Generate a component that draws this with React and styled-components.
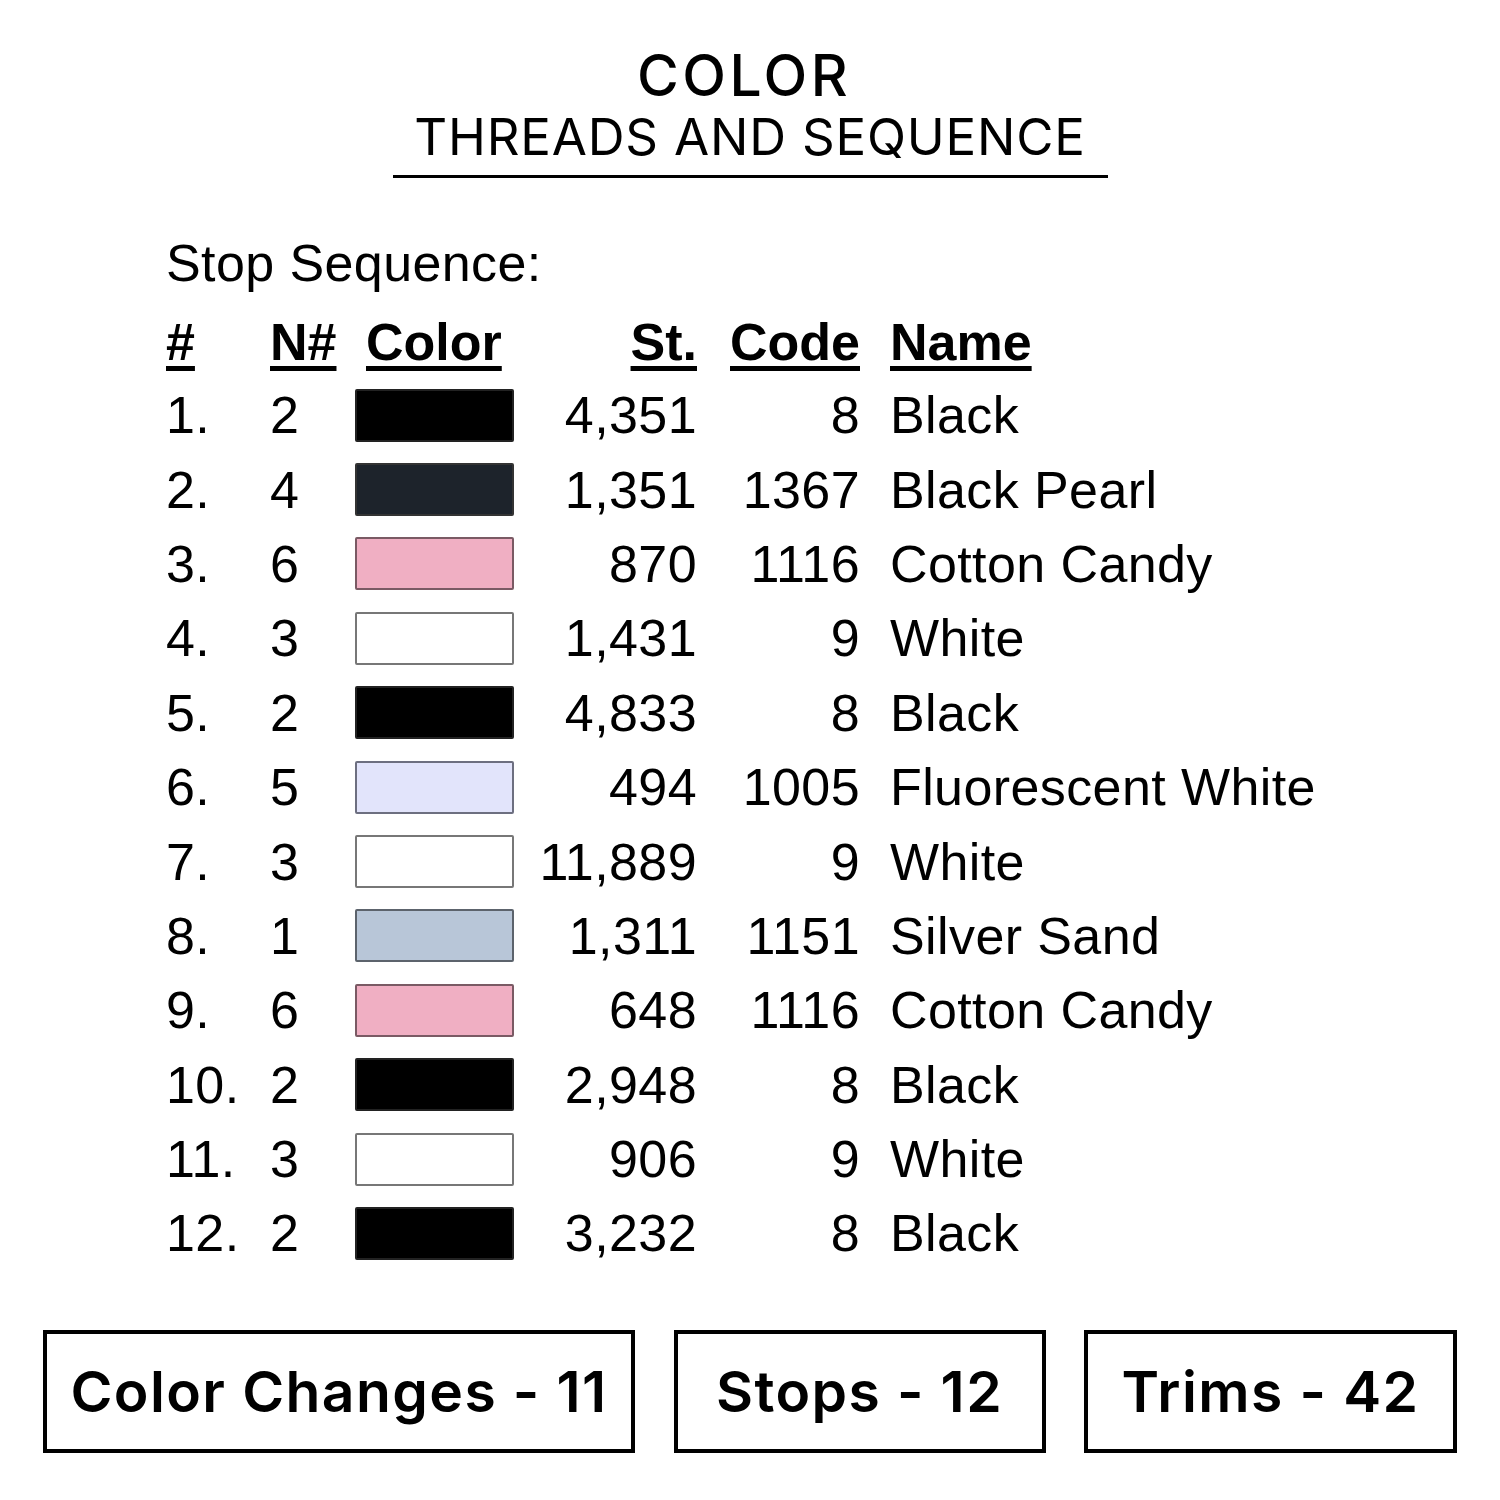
import React from 'react';
import styled, { createGlobalStyle } from 'styled-components';

const GlobalStyle = createGlobalStyle`
    html, body {
        margin: 0;
        padding: 0;
        background: #ffffff;
    }
`;

const Page = styled.div`
    width: 1500px;
    height: 1500px;
    background: #ffffff;
    color: #000000;
    display: flex;
    flex-direction: column;
    overflow: hidden;
`;

const Heading = styled.header`
    display: flex;
    flex-direction: column;
    align-items: center;
    padding-top: 44px;
    font-family: "Inter", "DejaVu Sans", sans-serif;
    h1 {
        margin: 0 12px 0 0;
        font-size: 57px;
        line-height: 64px;
        font-weight: 500;
        letter-spacing: 3.5px;
    }
    h2 {
        margin: 0;
        width: 715px;
        text-align: center;
        font-size: 51px;
        line-height: 58px;
        font-weight: 400;
        letter-spacing: 0.8px;
        padding-bottom: 9px;
        border-bottom: 3px solid #000;
    }
`;

const Sheet = styled.section`
    padding: 59px 0 0 166px;
    font-family: "Liberation Sans", Arial, sans-serif;
    font-size: 52px;
    letter-spacing: 0.4px;
    .caption {
        line-height: 52px;
        margin-bottom: 17px;
    }
`;

const Grid = styled.div`
    display: grid;
    grid-template-columns: 104px 85px 159px 183px 163px auto;
    grid-template-rows: 72px;
    grid-auto-rows: 74.4px;
    align-items: center;
`;

const Cell = styled.div`
    line-height: 52px;
    white-space: nowrap;
    text-align: ${p => (p.$right ? 'right' : 'left')};
    padding-left: ${p => p.$indent || 0}px;
`;

const HeadCell = styled(Cell)`
    font-weight: 700;
    letter-spacing: 0;
    text-decoration: underline;
    text-decoration-thickness: 5px;
    text-underline-offset: 6px;
`;

const Swatch = styled.div`
    height: 53px;
    background: ${p => p.$fill};
    border: 2px solid ${p => p.$edge};
    border-radius: 2px;
    box-sizing: border-box;
`;

const Totals = styled.footer`
    margin-top: auto;
    margin-bottom: 47px;
    padding: 0 43px;
    display: flex;
    justify-content: space-between;
`;

const TotalBox = styled.div`
    width: ${p => p.$w}px;
    height: 123px;
    box-sizing: border-box;
    border: 4px solid #000;
    display: flex;
    align-items: center;
    justify-content: center;
    font-family: "Inter", "DejaVu Sans", sans-serif;
    font-size: 57px;
    font-weight: 600;
    letter-spacing: 1.4px;
`;

const threads = [
    ['1.', '2', '#000000', '#222', '4,351', '8', 'Black'],
    ['2.', '4', '#1d232b', '#333', '1,351', '1367', 'Black Pearl'],
    ['3.', '6', '#f0afc3', '#7a5a64', '870', '1116', 'Cotton Candy'],
    ['4.', '3', '#ffffff', '#777', '1,431', '9', 'White'],
    ['5.', '2', '#000000', '#222', '4,833', '8', 'Black'],
    ['6.', '5', '#e2e4fb', '#6d6f80', '494', '1005', 'Fluorescent White'],
    ['7.', '3', '#ffffff', '#777', '11,889', '9', 'White'],
    ['8.', '1', '#b8c6d8', '#5c636c', '1,311', '1151', 'Silver Sand'],
    ['9.', '6', '#f0afc3', '#7a5a64', '648', '1116', 'Cotton Candy'],
    ['10.', '2', '#000000', '#222', '2,948', '8', 'Black'],
    ['11.', '3', '#ffffff', '#777', '906', '9', 'White'],
    ['12.', '2', '#000000', '#222', '3,232', '8', 'Black'],
];

const totals = [
    { label: 'Color Changes - 11', w: 592 },
    { label: 'Stops - 12', w: 372 },
    { label: 'Trims - 42', w: 373 },
];

export default function App() {
    return (
        <Page>
            <GlobalStyle />
            <Heading>
                <h1>COLOR</h1>
                <h2>THREADS AND SEQUENCE</h2>
            </Heading>
            <Sheet>
                <div className="caption">Stop Sequence:</div>
                <Grid>
                    <HeadCell>#</HeadCell>
                    <HeadCell>N#</HeadCell>
                    <HeadCell $indent={11}>Color</HeadCell>
                    <HeadCell $right>St.</HeadCell>
                    <HeadCell $right>Code</HeadCell>
                    <HeadCell $indent={30}>Name</HeadCell>
                    {threads.map(([n, needle, fill, edge, st, code, name]) => (
                        <React.Fragment key={n}>
                            <Cell>{n}</Cell>
                            <Cell>{needle}</Cell>
                            <Swatch $fill={fill} $edge={edge} />
                            <Cell $right>{st}</Cell>
                            <Cell $right>{code}</Cell>
                            <Cell $indent={30}>{name}</Cell>
                        </React.Fragment>
                    ))}
                </Grid>
            </Sheet>
            <Totals>
                {totals.map(t => (
                    <TotalBox key={t.label} $w={t.w}>{t.label}</TotalBox>
                ))}
            </Totals>
        </Page>
    );
}
